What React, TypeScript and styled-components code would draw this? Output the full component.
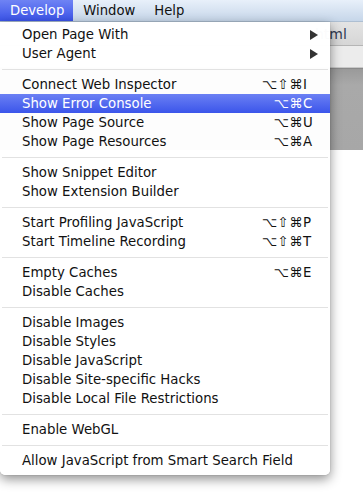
import React from "react";
import styled, { createGlobalStyle } from "styled-components";

const GlobalStyle = createGlobalStyle`
  html, body { margin: 0; padding: 0; background: #ffffff; }
  body { font-family: "DejaVu Sans", "Liberation Sans", sans-serif; }
`;

const Screen = styled.div`
  position: relative;
  width: 363px;
  height: 494px;
  overflow: hidden;
  display: flex;
  flex-direction: column;
  background: #ffffff;
`;

const MenuBar = styled.div`
  height: 22px;
  flex: 0 0 22px;
  display: flex;
  align-items: stretch;
  background: linear-gradient(#e8f0fa, #c6d6e9);
  border-bottom: 1px solid #aebfd2;
  box-sizing: border-box;
`;

const MenuTitle = styled.div<{ $active?: boolean }>`
  display: flex;
  align-items: center;
  padding: 0 9px 0 10px;
  font-size: 13.2px;
  color: ${(p) => (p.$active ? "#ffffff" : "#111111")};
  background: ${(p) => (p.$active ? "linear-gradient(#6f83f4, #3a53e8)" : "transparent")};
`;

const Window = styled.div`
  flex: 1;
  display: flex;
  flex-direction: column;
`;

const Toolbar = styled.div`
  height: 24px;
  flex: 0 0 24px;
  background: linear-gradient(#e4e4e4, #d6d6d6);
  border-bottom: 1px solid #b5b5b5;
  box-sizing: border-box;
  display: flex;
  align-items: center;
  padding-left: 315px;
  font-size: 14px;
  color: #2f3a52;
`;

const AddressBar = styled.div`
  height: 22px;
  flex: 0 0 22px;
  background: #ececec;
  border-bottom: 1px solid #c8c8c8;
  box-sizing: border-box;
`;

const Band = styled.div`
  height: 82px;
  flex: 0 0 82px;
  background: linear-gradient(#9a9a9a, #a9a9a9 20%, #a7a7a7);
  border-top: 1px solid #8a8a8a;
  box-sizing: border-box;
`;

const Content = styled.div`
  flex: 1;
  background: #ffffff;
`;

const Dropdown = styled.div`
  position: absolute;
  top: 22px;
  left: 0;
  width: 330px;
  padding: 3px 0 5px;
  box-sizing: border-box;
  background: rgba(255, 255, 255, 0.98);
  border-radius: 0 0 5px 5px;
  box-shadow: 0 4px 12px rgba(0, 0, 0, 0.45), 0 0 1px rgba(0, 0, 0, 0.4);
  font-size: 13.3px;
`;

const Item = styled.div<{ $selected?: boolean }>`
  height: 19px;
  display: flex;
  align-items: center;
  padding: 0 12px 0 22px;
  color: ${(p) => (p.$selected ? "#ffffff" : "#111111")};
  background: ${(p) => (p.$selected ? "linear-gradient(#6b80f4, #3b55ea)" : "transparent")};
`;

const Label = styled.span`
  flex: 1;
  white-space: nowrap;
`;

const Shortcut = styled.span`
  display: flex;
  align-items: center;
`;

const Modifiers = styled.span`
  text-align: right;
  letter-spacing: 0.5px;
`;

const Key = styled.span`
  width: 15px;
  text-align: left;
`;

const Arrow = styled.svg`
  width: 8px;
  height: 10px;
`;

const Separator = styled.div`
  height: 12px;
  display: flex;
  align-items: center;
  padding: 0 2px;
  &::after {
    content: "";
    flex: 1;
    height: 1px;
    background: #e2e2e2;
  }
`;

type Entry = { label: string; mods?: string; key?: string; sub?: boolean; selected?: boolean };

const groups: Entry[][] = [
  [
    { label: "Open Page With", sub: true },
    { label: "User Agent", sub: true },
  ],
  [
    { label: "Connect Web Inspector", mods: "⌥⇧⌘", key: "I" },
    { label: "Show Error Console", mods: "⌥⌘", key: "C", selected: true },
    { label: "Show Page Source", mods: "⌥⌘", key: "U" },
    { label: "Show Page Resources", mods: "⌥⌘", key: "A" },
  ],
  [{ label: "Show Snippet Editor" }, { label: "Show Extension Builder" }],
  [
    { label: "Start Profiling JavaScript", mods: "⌥⇧⌘", key: "P" },
    { label: "Start Timeline Recording", mods: "⌥⇧⌘", key: "T" },
  ],
  [{ label: "Empty Caches", mods: "⌥⌘", key: "E" }, { label: "Disable Caches" }],
  [
    { label: "Disable Images" },
    { label: "Disable Styles" },
    { label: "Disable JavaScript" },
    { label: "Disable Site-specific Hacks" },
    { label: "Disable Local File Restrictions" },
  ],
  [{ label: "Enable WebGL" }],
  [{ label: "Allow JavaScript from Smart Search Field" }],
];

export default function App() {
  return (
    <>
      <GlobalStyle />
      <Screen>
        <MenuBar>
          <MenuTitle $active>Develop</MenuTitle>
          <MenuTitle>Window</MenuTitle>
          <MenuTitle>Help</MenuTitle>
        </MenuBar>
        <Window>
          <Toolbar>html</Toolbar>
          <AddressBar />
          <Band />
          <Content />
        </Window>
        <Dropdown>
          {groups.map((g, gi) => (
            <React.Fragment key={gi}>
              {gi > 0 && <Separator />}
              {g.map((e) => (
                <Item key={e.label} $selected={e.selected}>
                  <Label>{e.label}</Label>
                  {e.key && (
                    <Shortcut>
                      <Modifiers>{e.mods}</Modifiers>
                      <Key>{e.key}</Key>
                    </Shortcut>
                  )}
                  {e.sub && (
                    <Arrow viewBox="0 0 8 10">
                      <path d="M0 0 L8 5 L0 10 Z" fill="#333" />
                    </Arrow>
                  )}
                </Item>
              ))}
            </React.Fragment>
          ))}
        </Dropdown>
      </Screen>
    </>
  );
}
